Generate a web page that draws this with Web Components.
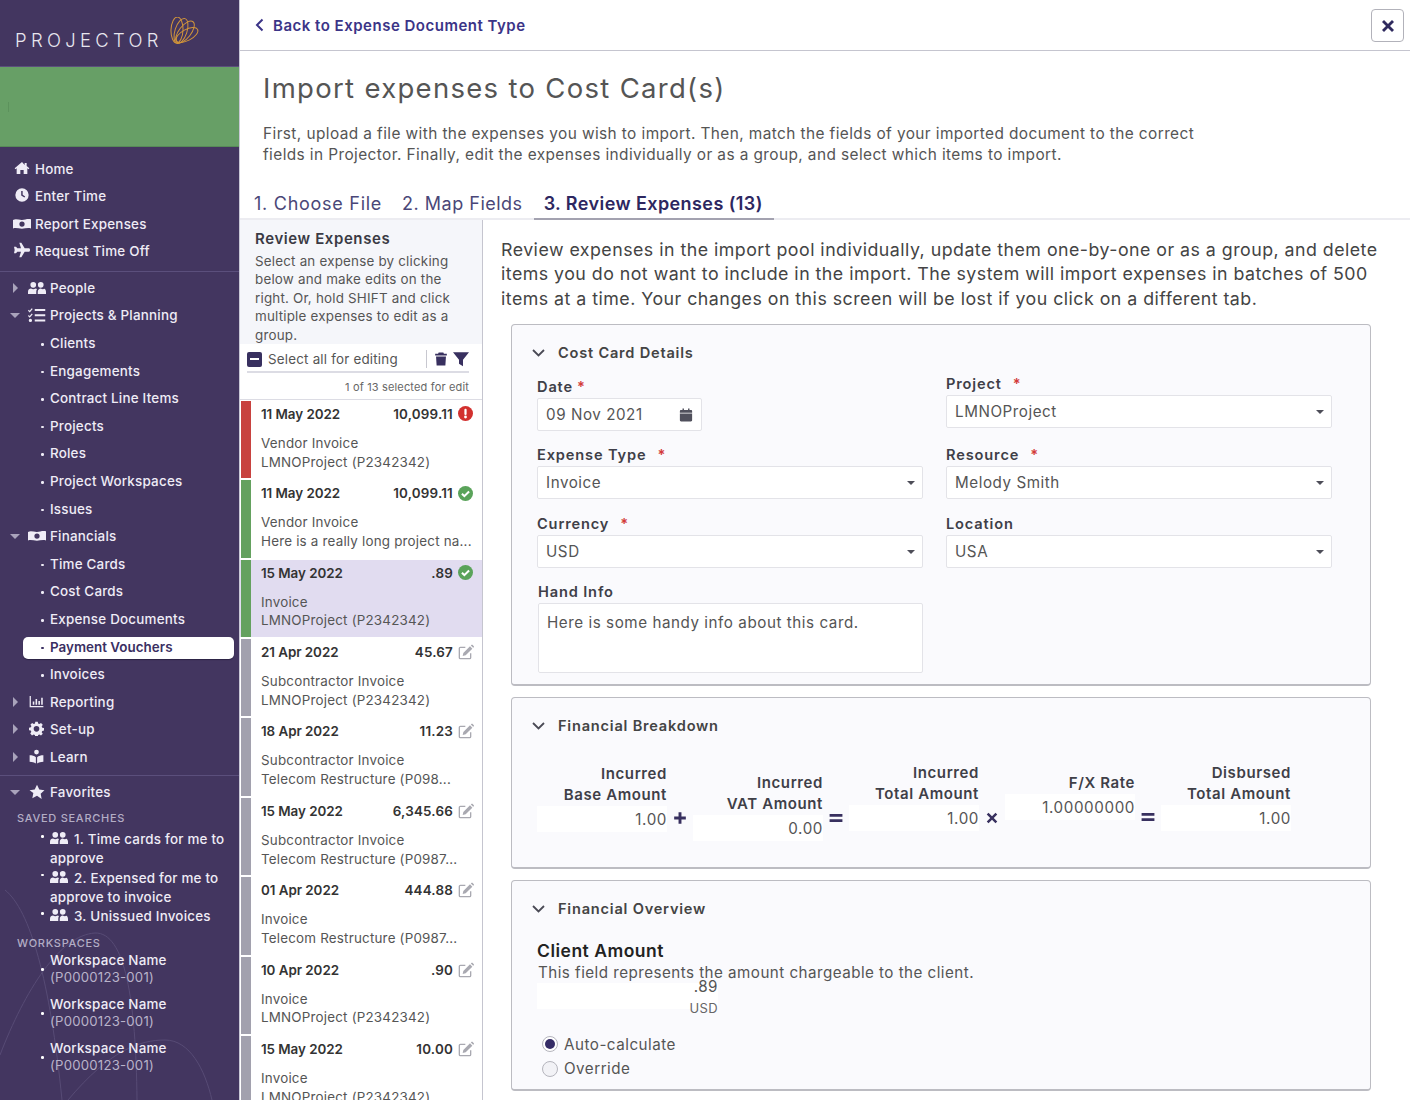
<!DOCTYPE html>
<html>
<head>
<meta charset="utf-8">
<title>Projector</title>
<style>
  html, body { margin: 0; height: 1100px; overflow: hidden; background: #fff; }
  body { font-family: Inter, "Open Sans", sans-serif; color: #444; display: flex; }
</style>
</head>
<body>
<p-sidenav>
  <p-nav kind="top" icon="home">Home</p-nav>
  <p-nav kind="top" icon="clock">Enter Time</p-nav>
  <p-nav kind="top" icon="money">Report Expenses</p-nav>
  <p-nav kind="top" icon="plane">Request Time Off</p-nav>
  <hr>
  <p-nav kind="tree" icon="users" caret="right">People</p-nav>
  <p-nav kind="tree" icon="tasks" caret="down">Projects &amp; Planning</p-nav>
  <p-nav kind="sub">Clients</p-nav>
  <p-nav kind="sub">Engagements</p-nav>
  <p-nav kind="sub">Contract Line Items</p-nav>
  <p-nav kind="sub">Projects</p-nav>
  <p-nav kind="sub">Roles</p-nav>
  <p-nav kind="sub">Project Workspaces</p-nav>
  <p-nav kind="sub">Issues</p-nav>
  <p-nav kind="tree" icon="money" caret="down">Financials</p-nav>
  <p-nav kind="sub">Time Cards</p-nav>
  <p-nav kind="sub">Cost Cards</p-nav>
  <p-nav kind="sub">Expense Documents</p-nav>
  <p-nav kind="sub" active>Payment Vouchers</p-nav>
  <p-nav kind="sub">Invoices</p-nav>
  <p-nav kind="tree" icon="chart" caret="right" isize="15">Reporting</p-nav>
  <p-nav kind="tree" icon="cog" caret="right" isize="15">Set-up</p-nav>
  <p-nav kind="tree" icon="learn" caret="right" isize="15">Learn</p-nav>
  <p-favorites></p-favorites>
</p-sidenav>

<p-main>
  <p-review slot="left">
    <p-expense date="11 May 2022" amount="10,099.11" status="error" type="Vendor Invoice" project="LMNOProject (P2342342)"></p-expense>
    <p-expense date="11 May 2022" amount="10,099.11" status="ok" type="Vendor Invoice" project="Here is a really long project na..."></p-expense>
    <p-expense date="15 May 2022" amount=".89" status="ok" type="Invoice" project="LMNOProject (P2342342)" selected></p-expense>
    <p-expense date="21 Apr 2022" amount="45.67" status="edit" type="Subcontractor Invoice" project="LMNOProject (P2342342)"></p-expense>
    <p-expense date="18 Apr 2022" amount="11.23" status="edit" type="Subcontractor Invoice" project="Telecom Restructure (P098..."></p-expense>
    <p-expense date="15 May 2022" amount="6,345.66" status="edit" type="Subcontractor Invoice" project="Telecom Restructure (P0987..."></p-expense>
    <p-expense date="01 Apr 2022" amount="444.88" status="edit" type="Invoice" project="Telecom Restructure (P0987..."></p-expense>
    <p-expense date="10 Apr 2022" amount=".90" status="edit" type="Invoice" project="LMNOProject (P2342342)"></p-expense>
    <p-expense date="15 May 2022" amount="10.00" status="edit" type="Invoice" project="LMNOProject (P2342342)"></p-expense>
  </p-review>

  <p-panel slot="right" title="Cost Card Details" height="362">
    <p-columns>
      <div slot="a">
        <p-field label="Date" req="1" kind="date" value="09 Nov 2021" pad="53"></p-field>
        <p-field label="Expense Type" req="11" kind="select" value="Invoice" pad="15"></p-field>
        <p-field label="Currency" req="11" kind="select" value="USD" pad="16"></p-field>
        <p-field label="Hand Info" kind="area" value="Here is some handy info about this card." pad="15"></p-field>
      </div>
      <div slot="b">
        <p-field label="Project" req="11" kind="select" value="LMNOProject" pad="50"></p-field>
        <p-field label="Resource" req="11" kind="select" value="Melody Smith" pad="18"></p-field>
        <p-field label="Location" kind="select" value="USA" pad="16"></p-field>
      </div>
    </p-columns>
  </p-panel>

  <p-panel slot="right" title="Financial Breakdown" height="172">
    <p-breakdown>
      <p-amount top="0" one="Incurred" two="Base Amount" value="1.00"></p-amount>
      <p-op icon="plus" top="45"></p-op>
      <p-amount top="9" one="Incurred" two="VAT Amount" value="0.00"></p-amount>
      <p-op icon="eq" top="45"></p-op>
      <p-amount top="-1" one="Incurred" two="Total Amount" value="1.00"></p-amount>
      <p-op icon="times" top="45"></p-op>
      <p-amount top="-1" two="F/X Rate" value="1.00000000" fx></p-amount>
      <p-op icon="eq" top="44"></p-op>
      <p-amount top="-1" one="Disbursed" two="Total Amount" value="1.00"></p-amount>
    </p-breakdown>
  </p-panel>

  <p-panel slot="right" title="Financial Overview" height="211">
    <p-overview></p-overview>
  </p-panel>
</p-main>

<script>
// icons, hand drawn to roughly follow the solid set the app uses
const ICONS = {
  home: '<path d="M12 3 1 12.5l1.2 1.4L4 12.4V21h5.5v-6h5v6H20v-8.600l1.800 1.500 1.200-1.400-4-3.400V4.500h-3v2.900z"/>',
  clock: '<path fill-rule="evenodd" d="M12 2a10 10 0 1 0 0 20 10 10 0 0 0 0-20zm-1.200 4h2.200v5.500l3.800 2.600-1.200 1.800-4.800-3.300z"/>',
  money: '<path fill-rule="evenodd" d="M0 6.500c4-1.800 8 .2 12 0s8-2 12-.7V18c-4-1.600-8 .2-12 .3S4 16.500 0 18zM12 8.500a3.500 3.500 0 1 0 0 7 3.500 3.500 0 0 0 0-7z"/>',
  plane: '<path d="M22.500 9.500c1.200 0 1.500 1.500 1.500 2.500s-.3 2.500-1.500 2.500H16L11 23H8l2.500-8.500H5L3 17H0l1-5-1-5h3l2 2.500h5.500L8 1h3l5 8.500z"/>',
  users: '<path d="M7 4a3.800 3.800 0 1 1 0 7.600A3.800 3.800 0 0 1 7 4zm10 0a3.800 3.800 0 1 1 0 7.600A3.800 3.800 0 0 1 17 4zM0 20v-3c0-2.800 2-4.300 4-4.300 1 .6 2 .9 3 .9s2-.3 3-.9c.8 0 1.600.3 2 .7-.6.800-1 2-1 3.600v3zm13 0v-3c0-2.600 1.800-4.300 4-4.300 1 .6 2 .9 3 .9.500 0 1-.2 1.500-.6 1.500.3 2.500 2 2.500 4v3z"/>',
  tasks: '<path d="M9 4h14v2.500H9zM9 11h14v2.500H9zM9 18h14v2.500H9zM1 5l1.200 1.200L5 3l1.300 1L2.300 8.500 0 6.200zM1 12l1.200 1.200L5 10l1.300 1-4 4.500L0 13.200zM3.200 17a2.200 2.200 0 1 1 0 4.400 2.200 2.200 0 0 1 0-4.400z"/>',
  chart: '<path d="M1 3h2v16h20v2H1zM6 12h2.500v5H6zM10.500 8H13v9h-2.500zM15 11h2.500v6H15zM19.500 6H22v11h-2.500z"/>',
  cog: '<path fill-rule="evenodd" d="M10 1h4l.6 3 2 .9 2.600-1.700 2.800 2.800-1.700 2.600.9 2 3 .6v4l-3 .6-.9 2 1.700 2.600-2.800 2.800-2.600-1.700-2 .9-.6 3h-4l-.6-3-2-.9-2.600 1.700L2 19.800l1.700-2.600-.9-2-2.800-.6v-4l3-.6.9-2L2.200 6l2.800-2.800 2.600 1.700 2-.9zm2 7a4.500 4.500 0 1 0 0 9 4.500 4.500 0 0 0 0-9z"/>',
  learn: '<path d="M12 1a3.800 3.800 0 1 1 0 7.600A3.800 3.800 0 0 1 12 1zM1 10c4 0 7.500 1 10 3v10c-2.500-1.600-6-2.500-10-2.600zm22 0c-4 0-7.500 1-10 3v10c2.500-1.600 6-2.500 10-2.600z"/>',
  star: '<path d="m12 1 3.400 7.200 7.800 1-5.700 5.400 1.500 7.800L12 17.600l-7 3.800 1.500-7.800L.8 9.200l7.800-1z"/>',
  cal: '<path d="M6 1h2.500v3H6zM15.500 1H18v3h-2.500zM3 3.500h18a1.500 1.500 0 0 1 1.500 1.500v3h-21V5A1.500 1.500 0 0 1 3 3.500zM1.500 9.500h21V21a2 2 0 0 1-2 2h-17a2 2 0 0 1-2-2z"/>',
  trash: '<path d="M8 1h8l1 2h5v3H2V3h5zM3.500 7.500h17L19.500 23h-15z"/>',
  filter: '<path d="M0 2h24l-9 11v10l-6-4v-6z"/>',
  plus: '<path d="M9.500 2h5v7.500H22v5h-7.500V22h-5v-7.500H2v-5h7.500z"/>',
  eq: '<path d="M1 5h22v5H1zM1 14h22v5H1z"/>',
  times: '<path d="m6 3 6 6 6-6 3 3-6 6 6 6-3 3-6-6-6 6-3-3 6-6-6-6z"/>',
  edit: '<path fill="none" stroke="currentColor" stroke-width="2" d="M19 14v6.500a1.500 1.500 0 0 1-1.500 1.500h-14A1.500 1.500 0 0 1 2 20.500v-14A1.500 1.500 0 0 1 3.500 5H11"/><path d="M8 13.500 18 3.500l3.500 3.500-10 10L7 18zM19.300 2.200l1-.9a1 1 0 0 1 1.400 0l2 2a1 1 0 0 1 0 1.400l-1 1z"/>'
};

class PIcon extends HTMLElement {
  connectedCallback() {
    const s = this.getAttribute('size') || 16;
    this.attachShadow({mode: 'open'}).innerHTML =
      '<style>:host{display:inline-flex;flex:none;line-height:0}</style>' +
      '<svg width="' + s + '" height="' + s + '" viewBox="0 0 24 24" fill="currentColor">' + ICONS[this.getAttribute('name')] + '</svg>';
  }
}
customElements.define('p-icon', PIcon);

const sideTpl = document.createElement('template');
sideTpl.innerHTML = `
<style>
  :host { display: block; flex: none; width: 240px; height: 1100px; box-sizing: border-box; background: #433660; color: #efecf6;
    position: relative; overflow: hidden; border-right: 1px solid #c9c8d6; }
  .logo { height: 67px; box-sizing: border-box; padding: 17px 0 0 15px; display: flex; align-items: flex-start; border-bottom: 1px solid #5b4f7c; }
  .word { font-size: 18.4px; letter-spacing: 4.35px; font-weight: 300; color: #e8e6ef; margin-top: 12px; line-height: 22px; }
  .logo svg { margin: 0 0 0 5px; }
  .green { height: 80px; box-sizing: border-box; background: #679f66; border-bottom: 1px solid #578a58; padding: 35px 0 0 8px; }
  .green i { display: block; width: 1px; height: 10px; background: #5c925c; }
  .nav { padding-top: 8.500px; position: relative; z-index: 1; }
  ::slotted(hr) { border: 0; border-top: 1px solid #5b4f7c; margin: 5px 0 3px; }
  .lines { position: absolute; left: 0; bottom: 0; }
</style>
<div class="logo">
  <span class="word">PROJECTOR</span>
  <svg width="32" height="32" viewBox="0 0 32 32" fill="none" stroke="#d2953a" stroke-width="1">
    <ellipse cx="9" cy="13" rx="6" ry="13" transform="rotate(2 9 13)"/>
    <ellipse cx="13" cy="14" rx="6" ry="13" transform="rotate(18 13 14)"/>
    <ellipse cx="17" cy="15" rx="6" ry="13" transform="rotate(38 17 15)"/>
    <ellipse cx="19" cy="18" rx="5.500" ry="12" transform="rotate(62 19 18)"/>
  </svg>
</div>
<div class="green"><i></i></div>
<svg class="lines" width="240" height="220" viewBox="0 0 240 220" fill="none" stroke="#574b75" stroke-width="1">
  <path d="M5 10C30 30 50 100 62 220"/>
  <path d="M0 175C25 110 60 55 95 53c30-1 41 67 42 167"/>
  <path d="M68 220c42-50 72-60 97-60 25 0 40 30 47 60"/>
</svg>
<div class="nav"><slot></slot></div>`;
customElements.define('p-sidenav', class extends HTMLElement {
  constructor() { super(); this.attachShadow({mode: 'open'}).appendChild(sideTpl.content.cloneNode(true)); }
});

const navTpl = document.createElement('template');
navTpl.innerHTML = `
<style>
  :host { display: flex; align-items: center; height: 27.6px; font-size: 13.4px; font-weight: 500; letter-spacing: .22px; position: relative; white-space: nowrap; }
  .caret { position: absolute; left: 13px; top: 8px; width: 0; height: 0; }
  .caret.right { border-left: 5px solid #a9a3bb; border-top: 5px solid transparent; border-bottom: 5px solid transparent; }
  .caret.down { left: 10px; top: 11px; border-top: 5px solid #a9a3bb; border-left: 5px solid transparent; border-right: 5px solid transparent; }
  .ic { position: absolute; top: 4px; }
  .txt { position: absolute; top: 0; line-height: 26px; }
  .dot { position: absolute; left: 41px; top: 13px; width: 2.500px; height: 2.500px; border-radius: 50%; background: currentColor; }
  :host([active]) .pill { position: absolute; left: 23px; right: 5px; top: 3px; height: 22px; background: #fff; border-radius: 5px; box-shadow: 0 1px 1px #2c2344; }
  :host([active]) { color: #3a2f62; font-weight: 600; }
  :host([active]) .txt { letter-spacing: .03px; }
</style>
<div class="pill"></div>`;
class PNav extends HTMLElement {
  connectedCallback() {
    const root = this.attachShadow({mode: 'open'});
    root.appendChild(navTpl.content.cloneNode(true));
    const kind = this.getAttribute('kind');
    const icon = this.getAttribute('icon');
    let html = '';
    if (this.hasAttribute('caret')) html += '<span class="caret ' + this.getAttribute('caret') + '"></span>';
    if (kind === 'top') {
      const big = icon === 'money';
      html += '<p-icon class="ic" style="left:' + (big ? 13 : 14) + 'px" size="' + (big ? 18 : 16) + '" name="' + icon + '"></p-icon>';
      html += '<span class="txt" style="left:35px"><slot></slot></span>';
    } else if (kind === 'tree') {
      const s = +(this.getAttribute('isize') || 18);
      html += '<p-icon class="ic" style="left:' + (s < 18 ? 29 : 28) + 'px;top:' + (s < 18 ? 5 : 4) + 'px" size="' + s + '" name="' + icon + '"></p-icon>';
      html += '<span class="txt" style="left:50px"><slot></slot></span>';
    } else {
      html += '<span class="dot"></span><span class="txt" style="left:50px"><slot></slot></span>';
    }
    const box = document.createElement('div');
    box.innerHTML = html;
    root.append(...box.childNodes);
  }
}
customElements.define('p-nav', PNav);

const favTpl = document.createElement('template');
favTpl.innerHTML = `
<style>
  :host { display: block; font-size: 13.4px; font-weight: 500; letter-spacing: .22px; }
  hr { border: 0; border-top: 1px solid #5b4f7c; margin: 3px 0 3px; }
  h4 { margin: 5px 0 0 17px; font-size: 11px; line-height: 14px; font-weight: 500; color: #b3adc5; letter-spacing: .72px; }
  ul { list-style: none; margin: 0; padding: 0 6px 0 50px; }
  li { position: relative; }
  li::before { content: ""; position: absolute; left: -9px; width: 2.500px; height: 2.500px; border-radius: 50%; background: #fff; }
  .saved { margin-top: 5px; line-height: 19.250px; }
  .saved li::before { top: 5px; }
  .saved p-icon { vertical-align: -3px; margin: -4px 6px -4px 0; }
  .ws { margin-top: 2px; }
  .ws li { height: 44px; line-height: 17px; }
  .ws li::before { top: 16px; }
  .ws small { display: block; font-size: 13.2px; color: #b9b3ca; font-weight: 400; }
</style>
<hr>
<p-nav kind="tree" icon="star" caret="down" isize="16">Favorites</p-nav>
<h4>SAVED SEARCHES</h4>
<ul class="saved">
  <li><p-icon name="users" size="18"></p-icon>1. Time cards for me to approve</li>
  <li><p-icon name="users" size="18"></p-icon>2. Expensed for me to approve to invoice</li>
  <li><p-icon name="users" size="18"></p-icon>3. Unissued Invoices</li>
</ul>
<h4 style="margin-top:10px">WORKSPACES</h4>
<ul class="ws">
  <li>Workspace Name<small>(P0000123-001)</small></li>
  <li>Workspace Name<small>(P0000123-001)</small></li>
  <li>Workspace Name<small>(P0000123-001)</small></li>
</ul>`;
customElements.define('p-favorites', class extends HTMLElement {
  constructor() { super(); this.attachShadow({mode: 'open'}).appendChild(favTpl.content.cloneNode(true)); }
});

const mainTpl = document.createElement('template');
mainTpl.innerHTML = `
<style>
  :host { display: flex; flex-direction: column; flex: 1; min-width: 0; height: 1100px; overflow: hidden; background: #fff; }
  .top { height: 50px; flex: none; border-bottom: 1px solid #c5c5cf; display: flex; align-items: center; justify-content: space-between; padding: 0 6px 0 15px; }
  .back { display: flex; align-items: center; gap: 9px; color: #3b3487; font-size: 15px; font-weight: 600; letter-spacing: .5px; }
  .close { width: 31px; height: 31px; border: 1px solid #b2b2ba; border-radius: 4px; display: flex; align-items: center; justify-content: center; color: #2f2a5e; margin-top: 1px; }
  h1 { margin: 19px 0 0 23px; font-size: 27.500px; line-height: 36px; font-weight: 400; color: #555; letter-spacing: 1.300px; }
  .intro { margin: 17px 0 0 23px; font-size: 15.400px; line-height: 21.400px; color: #555; letter-spacing: .41px; }
  .tabs { display: flex; margin-top: 21px; height: 31px; border-bottom: 2px solid #ececf1; flex: none; font-size: 18px; letter-spacing: .73px; color: #4a4778; }
  .tab { padding: 0 10px 0 14px; line-height: 33px; }
  .tab.second { padding: 0 11px 0 10px; letter-spacing: .5px; }
  .tab.on { color: #2d2760; font-weight: 600; padding: 0 11px 0 10px; height: 31px; border-bottom: 2px solid #a3a2b0; letter-spacing: .42px; }
  .body { display: flex; flex: 1; min-height: 0; }
  .left { width: 243px; flex: none; border-right: 1px solid #c5c5cf; box-sizing: border-box; overflow: hidden; }
  .right { flex: 1; padding: 18px 39px 0 18px; min-width: 0; }
  .lead { margin: 0 0 13px; font-size: 17.800px; line-height: 24.500px; color: #444; letter-spacing: .47px; white-space: nowrap; margin-right: -30px; }
</style>
<div class="top">
  <div class="back">
    <svg width="9" height="14" viewBox="0 0 9 14" fill="none" stroke="currentColor" stroke-width="2"><path d="M7.500 1.500 2 7l5.500 5.500"/></svg>
    <span>Back to Expense Document Type</span>
  </div>
  <div class="close"><p-icon name="times" size="16"></p-icon></div>
</div>
<h1>Import expenses to Cost Card(s)</h1>
<p class="intro">First, upload a file with the expenses you wish to import. Then, match the fields of your imported document to the correct<br>fields in Projector. Finally, edit the expenses individually or as a group, and select which items to import.</p>
<div class="tabs">
  <div class="tab">1. Choose File</div>
  <div class="tab second">2. Map Fields</div>
  <div class="tab on">3. Review Expenses (13)</div>
</div>
<div class="body">
  <div class="left"><slot name="left"></slot></div>
  <div class="right">
    <p class="lead">Review expenses in the import pool individually, update them one-by-one or as a group, and delete<br>items you do not want to include in the import. The system will import expenses in batches of 500<br>items at a time. Your changes on this screen will be lost if you click on a different tab.</p>
    <slot name="right"></slot>
  </div>
</div>`;
customElements.define('p-main', class extends HTMLElement {
  constructor() { super(); this.attachShadow({mode: 'open'}).appendChild(mainTpl.content.cloneNode(true)); }
});

const reviewTpl = document.createElement('template');
reviewTpl.innerHTML = `
<style>
  :host { display: block; font-size: 13.400px; }
  .head { background: #f5f6fa; padding: 9px 14px 0 15px; height: 115px; overflow: hidden; }
  h3 { margin: 0; font-size: 15px; line-height: 19px; font-weight: 600; color: #3a3a44; letter-spacing: .6px; }
  p { margin: 4px 0 0; line-height: 18.550px; color: #555; letter-spacing: .2px; }
  .sel { height: 29px; padding-top: 4px; margin: 0 13px 0 7px; display: flex; align-items: center; border-bottom: 2px solid #dcdce4; color: #555; letter-spacing: .2px; box-sizing: border-box; }
  .box { width: 15px; height: 15px; background: #38305f; border-radius: 2px; margin-right: 6px; display: flex; align-items: center; justify-content: center; }
  .box i { width: 9px; height: 2px; background: #fff; }
  .sp { flex: 1; }
  .sep { width: 1px; height: 18px; background: #c8c8d0; margin-right: 7px; }
  .count { height: 27px; box-sizing: border-box; padding-right: 13px; text-align: right; font-size: 11px; line-height: 28px; color: #666; border-bottom: 1px solid #dcdce4; letter-spacing: .16px; margin-bottom: 1px; }
  p-icon { color: #38305f; }
</style>
<div class="head">
  <h3>Review Expenses</h3>
  <p>Select an expense by clicking below and make edits on the right. Or, hold SHIFT and click multiple expenses to edit as a group.</p>
</div>
<div class="sel">
  <span class="box"><i></i></span>Select all for editing<span class="sp"></span><span class="sep"></span>
  <p-icon name="trash" size="14"></p-icon><span style="width:5px"></span><p-icon name="filter" size="16"></p-icon>
</div>
<div class="count">1 of 13 selected for edit</div>
<slot></slot>`;
customElements.define('p-review', class extends HTMLElement {
  constructor() { super(); this.attachShadow({mode: 'open'}).appendChild(reviewTpl.content.cloneNode(true)); }
});

const expTpl = document.createElement('template');
expTpl.innerHTML = `
<style>
  :host { display: flex; height: 77.400px; margin-bottom: 2px; font-size: 13.400px; color: #555; background: #fff; letter-spacing: .2px; }
  :host([selected]) { background: #e1dcf0; }
  .bar { width: 10px; flex: none; margin-right: 10px; margin-left: 1px; }
  .main { flex: 1; min-width: 0; padding-right: 8px; }
  .row { display: flex; align-items: center; height: 26px; font-weight: 600; color: #333; }
  .date { flex: 1; letter-spacing: -.05px; }
  .st { width: 16px; margin-left: 5px; display: flex; }
  .sub { margin-top: 7px; line-height: 18.800px; }
  .sub div { white-space: nowrap; }
</style>
<div class="bar"></div>
<div class="main">
  <div class="row"><span class="date"></span><span class="amt"></span><span class="st"></span></div>
  <div class="sub"><div class="type"></div><div class="proj"></div></div>
</div>`;
const STATUS = {
  error: '<svg width="15" height="15" viewBox="0 0 16 16"><circle cx="8" cy="8" r="8" fill="#d2302e"/><rect x="6.800" y="3" width="2.400" height="6.500" rx="1" fill="#fff"/><circle cx="8" cy="11.700" r="1.500" fill="#fff"/></svg>',
  ok: '<svg width="15" height="15" viewBox="0 0 16 16"><circle cx="8" cy="8" r="8" fill="#5aa35a"/><path d="m4.200 8.200 2.600 2.600 5-5" fill="none" stroke="#fff" stroke-width="2.200"/></svg>',
  edit: '<p-icon name="edit" size="16" style="color:#a9a9b1"></p-icon>'
};
const BAR = { error: '#c8423f', ok: '#64a15f', edit: '#a2a1ae' };
customElements.define('p-expense', class extends HTMLElement {
  connectedCallback() {
    const r = this.attachShadow({mode: 'open'});
    r.appendChild(expTpl.content.cloneNode(true));
    const st = this.getAttribute('status');
    r.querySelector('.bar').style.background = BAR[st];
    r.querySelector('.date').textContent = this.getAttribute('date');
    r.querySelector('.amt').textContent = this.getAttribute('amount');
    r.querySelector('.st').innerHTML = STATUS[st];
    r.querySelector('.type').textContent = this.getAttribute('type');
    r.querySelector('.proj').textContent = this.getAttribute('project');
  }
});

const panelTpl = document.createElement('template');
panelTpl.innerHTML = `
<style>
  :host { display: block; box-sizing: border-box; border: 1px solid #bcbcc2; border-bottom-width: 2px; border-radius: 4px; background: #fafafd; margin: 0 0 11px 10px; padding: 0 25px; overflow: hidden; }
  .hd { display: flex; align-items: center; height: 55px; margin-left: -5px; font-size: 14.600px; font-weight: 600; color: #444; letter-spacing: .78px; }
  .hd svg { margin-right: 13px; }
</style>
<div class="hd">
  <svg width="13" height="8" viewBox="0 0 13 8" fill="none" stroke="#4a4a55" stroke-width="1.800"><path d="m1 1 5.500 5.500L12 1"/></svg>
  <span class="t"></span>
</div>
<slot></slot>`;
customElements.define('p-panel', class extends HTMLElement {
  connectedCallback() {
    const r = this.attachShadow({mode: 'open'});
    r.appendChild(panelTpl.content.cloneNode(true));
    r.querySelector('.t').textContent = this.getAttribute('title');
    this.style.height = this.getAttribute('height') + 'px';
  }
});

const colsTpl = document.createElement('template');
colsTpl.innerHTML = `
<style>
  :host { display: grid; grid-template-columns: 386px 386px; column-gap: 23px; margin-top: -55px; }
</style>
<slot name="a"></slot><slot name="b"></slot>`;
customElements.define('p-columns', class extends HTMLElement {
  constructor() { super(); this.attachShadow({mode: 'open'}).appendChild(colsTpl.content.cloneNode(true)); }
});

const fieldTpl = document.createElement('template');
fieldTpl.innerHTML = `
<style>
  :host { display: block; }
  label { display: block; height: 18px; line-height: 18px; font-size: 14.600px; font-weight: 600; color: #3f3f48; letter-spacing: .85px; margin-bottom: 2px; }
  label b { color: #d33a3a; font-weight: 600; }
  .input { height: 33px; box-sizing: border-box; background: #fff; border: 1px solid #e3e3e8; border-radius: 2px; display: flex; align-items: center; padding: 0 8px; font-size: 15.200px; color: #555; letter-spacing: .55px; }
  .input span { flex: 1; }
  .arrow { width: 0; height: 0; border-top: 4.500px solid #4d4d58; border-left: 4.500px solid transparent; border-right: 4.500px solid transparent; margin-right: -1px; }
  :host([kind=date]) .input { width: 165px; }
  :host([kind=area]) .input { height: 70px; align-items: flex-start; padding-top: 9px; margin-left: 1px; line-height: 19px; }
  :host([kind=area]) label { margin-left: 1px; }
  p-icon { color: #50505c; }
</style>
<label></label>
<div class="input"><span></span></div>`;
customElements.define('p-field', class extends HTMLElement {
  connectedCallback() {
    const r = this.attachShadow({mode: 'open'});
    r.appendChild(fieldTpl.content.cloneNode(true));
    const req = this.getAttribute('req');
    r.querySelector('label').innerHTML = this.getAttribute('label') +
      (req ? '<b style="margin-left:' + (req === '1' ? 4 : 11) + 'px">*</b>' : '');
    r.querySelector('span').textContent = this.getAttribute('value');
    const kind = this.getAttribute('kind');
    const input = r.querySelector('.input');
    if (kind === 'select') input.insertAdjacentHTML('beforeend', '<i class="arrow"></i>');
    if (kind === 'date') input.insertAdjacentHTML('beforeend', '<p-icon name="cal" size="14"></p-icon>');
    this.style.paddingTop = this.getAttribute('pad') + 'px';
  }
});

const bdTpl = document.createElement('template');
bdTpl.innerHTML = `
<style>
  :host { display: flex; align-items: flex-start; padding-top: 9px; }
</style>
<slot></slot>`;
customElements.define('p-breakdown', class extends HTMLElement {
  constructor() { super(); this.attachShadow({mode: 'open'}).appendChild(bdTpl.content.cloneNode(true)); }
});

const amtTpl = document.createElement('template');
amtTpl.innerHTML = `
<style>
  :host { display: block; width: 130px; flex: none; text-align: right; font-size: 15px; letter-spacing: .6px; }
  .l { height: 21px; line-height: 21px; font-weight: 600; color: #3f3f48; white-space: nowrap; }
  .v { height: 26px; margin-top: 1px; background: #fff; line-height: 28px; font-size: 15.200px; color: #555; }
</style>
<div class="l one"></div><div class="l two"></div><div class="v"></div>`;
customElements.define('p-amount', class extends HTMLElement {
  connectedCallback() {
    const r = this.attachShadow({mode: 'open'});
    r.appendChild(amtTpl.content.cloneNode(true));
    if (this.hasAttribute('one')) r.querySelector('.one').textContent = this.getAttribute('one');
    else r.querySelector('.one').remove();
    r.querySelector('.two').textContent = this.getAttribute('two');
    r.querySelector('.v').textContent = this.getAttribute('value');
    let top = +this.getAttribute('top');
    if (this.hasAttribute('fx')) top = 9;
    this.style.marginTop = (top + 1) + 'px';
  }
});

customElements.define('p-op', class extends HTMLElement {
  connectedCallback() {
    this.attachShadow({mode: 'open'}).innerHTML =
      '<style>:host{display:flex;justify-content:center;width:26px;flex:none;color:#38305f}</style>' +
      '<p-icon name="' + this.getAttribute('icon') + '" size="14"></p-icon>';
    this.style.paddingTop = (+this.getAttribute('top') + 4) + 'px';
  }
});

const ovTpl = document.createElement('template');
ovTpl.innerHTML = `
<style>
  :host { display: block; }
  h5 { margin: 0; padding-top: 4px; font-size: 17.500px; line-height: 22px; font-weight: 600; color: #222; letter-spacing: .5px; }
  p { margin: 0 0 0 1px; font-size: 15.200px; line-height: 21px; color: #555; letter-spacing: .46px; white-space: nowrap; }
  .v { width: 181px; height: 26px; background: #fff; text-align: right; font-size: 15.200px; line-height: 8px; color: #555; letter-spacing: .5px; overflow: visible; }
  .c { width: 181px; text-align: right; font-size: 13px; line-height: 17px; color: #666; letter-spacing: .4px; margin-top: -9px; }
  .r { display: flex; align-items: center; gap: 6px; height: 24.300px; font-size: 15.200px; color: #555; letter-spacing: .5px; margin-left: 5px; }
  .r i { width: 14px; height: 14px; border: 1px solid #b5b5bd; border-radius: 50%; background: #f2f2f6; display: flex; align-items: center; justify-content: center; }
  .r i.on { background: #fff; }
  .r i.on::after { content: ""; width: 10px; height: 10px; border-radius: 50%; background: #352c66; }
  .radios { margin-top: 15px; }
</style>
<h5>Client Amount</h5>
<p>This field represents the amount chargeable to the client.</p>
<div class="v">.89</div>
<div class="c">USD</div>
<div class="radios">
  <div class="r"><i class="on"></i>Auto-calculate</div>
  <div class="r"><i></i>Override</div>
</div>`;
customElements.define('p-overview', class extends HTMLElement {
  constructor() { super(); this.attachShadow({mode: 'open'}).appendChild(ovTpl.content.cloneNode(true)); }
});
</script>
</body>
</html>
